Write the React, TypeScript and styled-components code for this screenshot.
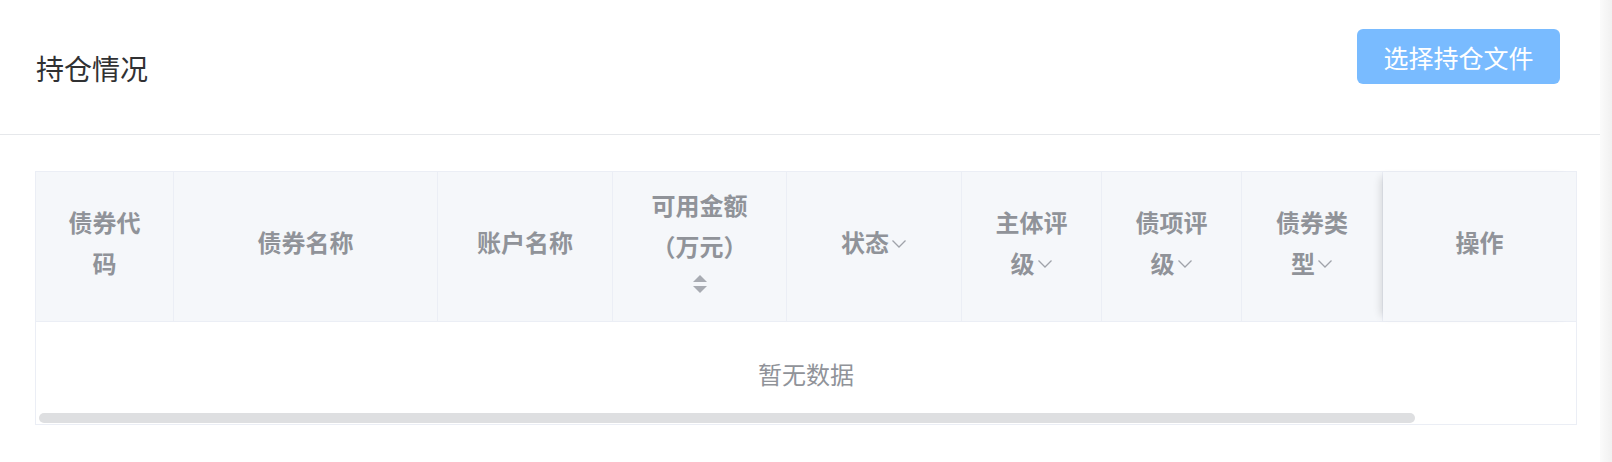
import React from "react";
import styled, { createGlobalStyle } from "styled-components";

const GlobalStyle = createGlobalStyle`
  html, body {
    margin: 0;
    padding: 0;
    background: #ffffff;
  }
  body {
    font-family: "Noto Sans CJK SC", "Noto Sans", sans-serif;
  }
  * { box-sizing: border-box; }
`;

const Page = styled.div`
  display: flex;
  width: 1612px;
  height: 462px;
  background: #ffffff;
`;

const Card = styled.section`
  width: 1600px;
  display: flex;
  flex-direction: column;
`;

const Gutter = styled.div`
  width: 12px;
  background: linear-gradient(to right, #fbfbfb, #f1f1f1);
`;

const CardHeader = styled.header`
  height: 135px;
  display: flex;
  align-items: flex-start;
  justify-content: space-between;
  padding: 29px 40px 0 36px;
  border-bottom: 1px solid #e6e8eb;
`;

const Title = styled.h2`
  margin: 20px 0 0 0;
  font-size: 28px;
  line-height: 38px;
  font-weight: 400;
  color: #303133;
`;

const PrimaryButton = styled.button`
  width: 203px;
  height: 55px;
  border: none;
  border-radius: 6px;
  background: #79bbff;
  color: #ffffff;
  font-family: inherit;
  font-size: 25px;
  padding: 0;
  cursor: pointer;
`;

const TableSection = styled.div`
  padding: 36px 23px 0 35px;
`;

const TableFrame = styled.div`
  position: relative;
  width: 1542px;
  border: 1px solid #ebeef5;
`;

const COLS = "138px 264px 175px 174px 175px 140px 140px 141px 193px";

const HeadRow = styled.div`
  display: grid;
  grid-template-columns: ${COLS};
  height: 150px;
  border-bottom: 1px solid #ebeef5;
  background: #f5f7fa;
`;

const HeadCell = styled.div<{ $fixed?: boolean; $last?: boolean }>`
  position: relative;
  display: flex;
  align-items: center;
  justify-content: center;
  text-align: center;
  padding: 0 20px 10px;
  font-size: 24px;
  line-height: 41px;
  font-weight: 700;
  color: #909399;
  border-right: ${(p) => (p.$last ? "none" : "1px solid #ebeef5")};
  box-shadow: ${(p) => (p.$fixed ? "-7px 0 8px -5px rgba(0,0,0,0.14)" : "none")};
  z-index: ${(p) => (p.$fixed ? 1 : 0)};
`;

const Label = styled.div`
  display: flex;
  flex-direction: column;
  align-items: center;
`;

const Line = styled.span`
  display: inline-flex;
  align-items: center;
  white-space: nowrap;
`;

const Chevron = styled.svg`
  width: 16px;
  height: 10px;
  margin-left: 2px;
  margin-top: 4px;
`;

const SortIcon = styled.svg`
  width: 16px;
  height: 20px;
  margin-top: 8px;
  margin-bottom: 6px;
`;

const Body = styled.div`
  height: 102px;
  display: flex;
  align-items: center;
  justify-content: center;
`;

const EmptyText = styled.span`
  font-size: 24px;
  color: #909399;
`;

const ScrollBar = styled.div`
  position: absolute;
  left: 3px;
  bottom: 1px;
  width: 1376px;
  height: 10px;
  border-radius: 5px;
  background: #dedfe1;
`;

type Col = { lines: string[]; filter?: boolean; sort?: boolean; fixed?: boolean };

const columns: Col[] = [
  { lines: ["债券代", "码"] },
  { lines: ["债券名称"] },
  { lines: ["账户名称"] },
  { lines: ["可用金额", "（万元）"], sort: true },
  { lines: ["状态"], filter: true },
  { lines: ["主体评", "级"], filter: true },
  { lines: ["债项评", "级"], filter: true },
  { lines: ["债券类", "型"], filter: true },
  { lines: ["操作"], fixed: true },
];

const ChevronDown = () => (
  <Chevron viewBox="0 0 16 10">
    <path d="M1.5 1.5 L8 8 L14.5 1.5" fill="none" stroke="#a0a3aa" strokeWidth="1.3" />
  </Chevron>
);

const SortCarets = () => (
  <SortIcon viewBox="0 0 16 20">
    <path d="M8 1 L15 8 L1 8 Z" fill="#a8abb2" />
    <path d="M8 19 L15 12 L1 12 Z" fill="#a8abb2" />
  </SortIcon>
);

export default function App() {
  return (
    <>
      <GlobalStyle />
      <Page>
        <Card>
          <CardHeader>
            <Title>持仓情况</Title>
            <PrimaryButton>选择持仓文件</PrimaryButton>
          </CardHeader>
          <TableSection>
            <TableFrame>
              <HeadRow>
                {columns.map((c, i) => (
                  <HeadCell key={i} $fixed={c.fixed} $last={i === columns.length - 1}>
                    <Label>
                      {c.lines.map((l, j) => (
                        <Line key={j}>
                          {l}
                          {c.filter && j === c.lines.length - 1 ? <ChevronDown /> : null}
                        </Line>
                      ))}
                      {c.sort ? <SortCarets /> : null}
                    </Label>
                  </HeadCell>
                ))}
              </HeadRow>
              <Body>
                <EmptyText>暂无数据</EmptyText>
              </Body>
              <ScrollBar />
            </TableFrame>
          </TableSection>
        </Card>
        <Gutter />
      </Page>
    </>
  );
}
